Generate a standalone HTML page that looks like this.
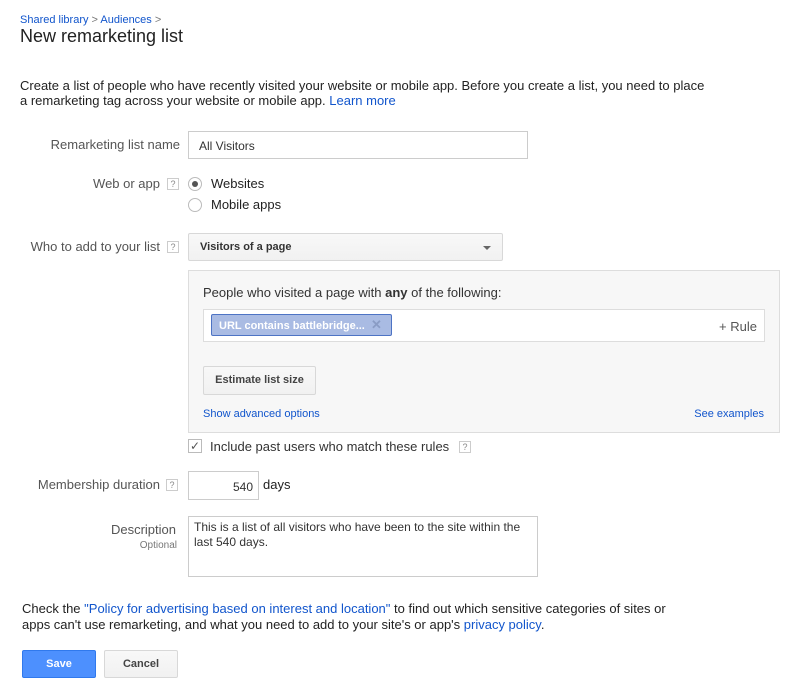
<!DOCTYPE html>
<html><head><meta charset="utf-8"><style>
body{margin:0;width:791px;height:690px;background:#fff;font-family:"Liberation Sans",Arial,sans-serif;color:#222;position:relative;overflow:hidden}
.a{position:absolute;white-space:nowrap}
.l{color:#555;font-size:13px;text-align:right}
a,.lk{color:#15c;text-decoration:none}
.q{position:absolute;width:10px;height:10px;border:1px solid #ccc;font-size:9px;color:#888;text-align:center;line-height:10px;background:#fff}
.box{position:absolute;border:1px solid #ccc;background:#fff;box-sizing:border-box}
.btn{position:absolute;box-sizing:border-box;border:1px solid #d8d8d8;background:linear-gradient(#f8f8f8,#f1f1f1);border-radius:2px;font-size:11px;font-weight:bold;color:#444;text-align:center}
</style></head><body>
<div class="a" style="left:20px;top:14px;font-size:11px;color:#15c">Shared library <span style="color:#777">&gt;</span> Audiences <span style="color:#777">&gt;</span></div>
<div class="a" style="left:20px;top:26px;font-size:18px;color:#222">New remarketing list</div>
<div class="a" style="left:20px;top:78px;font-size:13px;line-height:15px">Create a list of people who have recently visited your website or mobile app. Before you create a list, you need to place<br>a remarketing tag across your website or mobile app. <a>Learn more</a></div>

<div class="a l" style="right:611px;top:137px">Remarketing list name</div>
<div class="box" style="left:188px;top:131px;width:340px;height:28px;font-size:12px;padding:7px 10px;color:#333">All Visitors</div>

<div class="a l" style="right:631px;top:176px">Web or app</div>
<div class="q" style="left:167px;top:178px">?</div>
<div class="a" style="left:188px;top:177px;width:12px;height:12px;border:1px solid #bbb;border-radius:50%;background:#fff"><div style="width:6px;height:6px;border-radius:50%;background:#555;margin:3px"></div></div>
<div class="a" style="left:211px;top:176px;font-size:13px">Websites</div>
<div class="a" style="left:188px;top:198px;width:12px;height:12px;border:1px solid #bbb;border-radius:50%;background:#fff"></div>
<div class="a" style="left:211px;top:197px;font-size:13px">Mobile apps</div>

<div class="a l" style="right:631px;top:239px">Who to add to your list</div>
<div class="q" style="left:167px;top:241px">?</div>
<div class="btn" style="left:188px;top:233px;width:315px;height:28px;text-align:left;padding:7px 11px;color:#333">Visitors of a page<span style="position:absolute;right:11px;top:12px;border-left:4px solid transparent;border-right:4px solid transparent;border-top:4px solid #666"></span></div>

<div class="a" style="left:188px;top:270px;width:590px;height:161px;border:1px solid #ddd;background:#f7f7f7"></div>
<div class="a" style="left:203px;top:285px;font-size:13px;color:#333">People who visited a page with <b>any</b> of the following:</div>
<div class="box" style="left:203px;top:309px;width:562px;height:33px;border-color:#ddd"></div>
<div class="a" style="left:211px;top:314px;height:20px;background:#a9bbe3;border:1px solid #4d73c4;border-radius:2px;color:#fff;font-size:11px;font-weight:bold;line-height:20px;padding-left:7px;width:172px">URL contains battlebridge... <span style="color:#8a9cc5;font-size:13px;margin-left:3px">✕</span></div>
<div class="a" style="right:34px;top:319px;font-size:13px;color:#555">+ Rule</div>
<div class="btn" style="left:203px;top:366px;width:113px;height:29px;line-height:27px">Estimate list size</div>
<div class="a lk" style="left:203px;top:408px;font-size:11px">Show advanced options</div>
<div class="a lk" style="right:27px;top:408px;font-size:11px">See examples</div>

<div class="a" style="left:188px;top:439px;width:12px;height:12px;border:1px solid #bbb;background:#fff;font-size:12px;line-height:12px;color:#555;text-align:center">✓</div>
<div class="a" style="left:210px;top:439px;font-size:13px;color:#333">Include past users who match these rules</div>
<div class="q" style="left:459px;top:441px">?</div>

<div class="a l" style="right:631px;top:477px">Membership duration</div>
<div class="q" style="left:166px;top:479px">?</div>
<div class="box" style="left:188px;top:471px;width:71px;height:29px;font-size:12px;text-align:right;padding:8px 5px;color:#333">540</div>
<div class="a" style="left:263px;top:477px;font-size:13px">days</div>

<div class="a l" style="right:615px;top:522px">Description</div>
<div class="a" style="right:614px;top:540px;font-size:10px;color:#777">Optional</div>
<div class="box" style="left:188px;top:516px;width:350px;height:61px;font-size:12px;line-height:15px;padding:3px 5px;color:#333;white-space:normal">This is a list of all visitors who have been to the site within the last 540 days.</div>

<div class="a" style="left:22px;top:601px;font-size:13px;line-height:16px;color:#222">Check the <a>"Policy for advertising based on interest and location"</a> to find out which sensitive categories of sites or<br>apps can't use remarketing, and what you need to add to your site's or app's <a>privacy policy</a>.</div>

<div class="btn" style="left:22px;top:650px;width:74px;height:28px;line-height:26px;background:#4d90fe;border-color:#3079ed;color:#fff">Save</div>
<div class="btn" style="left:104px;top:650px;width:74px;height:28px;line-height:26px">Cancel</div>
</body></html>
